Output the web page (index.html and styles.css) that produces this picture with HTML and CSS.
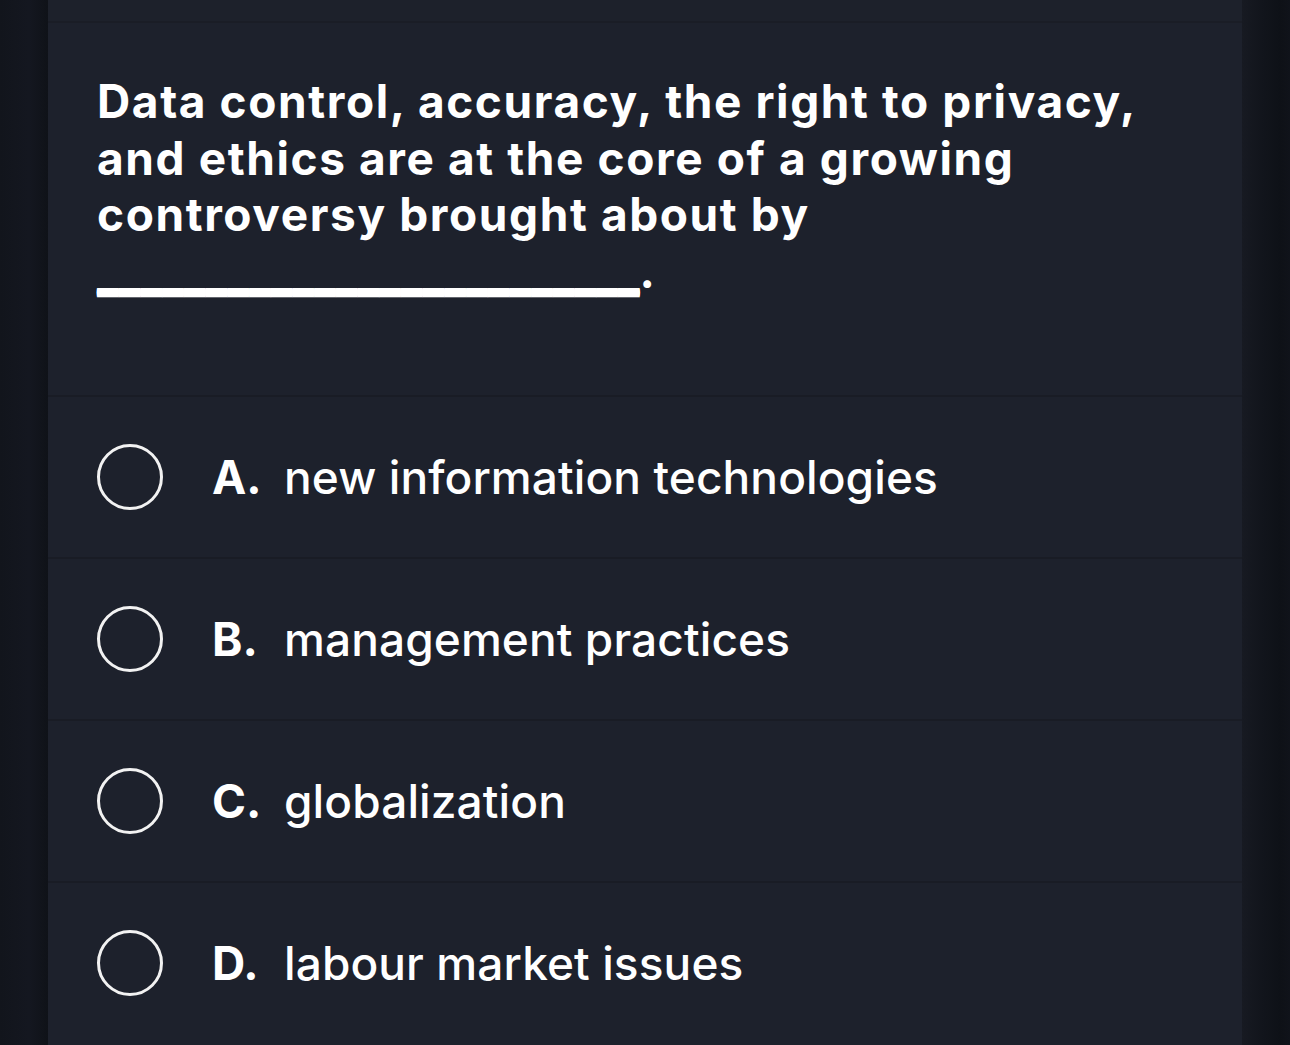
FILE: index.html
```html
<!DOCTYPE html>
<html>
<head>
<meta charset="utf-8">
<link rel="stylesheet" href="styles.css">
</head>
<body>
<div class="page">
  <div class="gutter left"></div>
  <main class="panel">
    <div class="top-strip"></div>
    <section class="question">
      <p class="q-text">Data control, accuracy, the right to privacy, and ethics are at the core of a growing controversy brought about by <span class="blank">_________________________</span>.</p>
    </section>
    <ul class="options">
      <li class="option"><span class="radio"></span><span class="letter">A.</span><span class="label">new information technologies</span></li>
      <li class="option"><span class="radio"></span><span class="letter">B.</span><span class="label">management practices</span></li>
      <li class="option"><span class="radio"></span><span class="letter">C.</span><span class="label">globalization</span></li>
      <li class="option"><span class="radio"></span><span class="letter">D.</span><span class="label">labour market issues</span></li>
    </ul>
  </main>
  <div class="gutter right"></div>
</div>
</body>
</html>
```

FILE: styles.css
```css
html, body {
  margin: 0;
  padding: 0;
  background: #11141a;
}
body {
  font-family: Inter, "Noto Sans", "Liberation Sans", sans-serif;
  color: #ffffff;
}
.page {
  display: flex;
  width: 1290px;
  height: 1045px;
  overflow: hidden;
}
.gutter {
  width: 48px;
  flex: none;
}
.gutter.left {
  background: linear-gradient(90deg, #12151c 0%, #141720 60%, #0f1218 100%);
}
.gutter.right {
  background: linear-gradient(90deg, #171a22 0%, #12151c 40%, #0e1117 80%, #10131a 100%);
}
.panel {
  width: 1194px;
  flex: none;
  background: #1d212c;
  display: flex;
  flex-direction: column;
}
.top-strip {
  height: 21px;
  background: #1d212b;
  border-bottom: 2px solid #1a1d26;
}
.question {
  padding: 50px 95px 96px 49px;
}
.q-text {
  margin: 0;
  font-size: 46px;
  line-height: 56.5px;
  font-weight: 700;
  letter-spacing: 1.6px;
}
.blank {
  letter-spacing: -0.2px;
  text-shadow: 0 1px 0 #ffffff, 0 2px 0 #ffffff, 0 3px 0 #ffffff, 0 4px 0 #ffffff;
}
.options {
  list-style: none;
  margin: 0;
  padding: 0;
}
.option {
  height: 160px;
  border-top: 2px solid #191c25;
  display: flex;
  align-items: center;
  padding-left: 49px;
}
.radio {
  width: 60px;
  height: 60px;
  border: 3px solid #f2f2f2;
  border-radius: 50%;
  flex: none;
  margin-right: 49px;
}
.letter {
  width: 72px;
  flex: none;
  font-size: 46px;
  font-weight: 700;
}
.label {
  font-size: 46px;
  font-weight: 500;
  letter-spacing: 0.1px;
}
```
